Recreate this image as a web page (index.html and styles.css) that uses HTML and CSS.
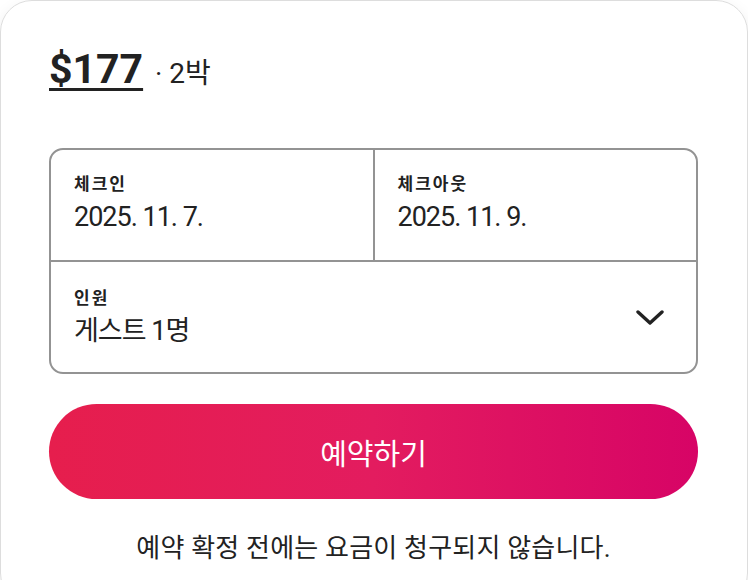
FILE: index.html
```html
<!DOCTYPE html>
<html>
<head>
    <title>예약</title>
    <link rel="stylesheet" href="styles.css">
</head>
<body>
    <div class="card">
        <div class="price-row">
            <span class="price">$177</span>
            <span class="nights">· 2박</span>
        </div>
        <div class="picker">
            <div class="dates">
                <div class="field">
                    <div class="label">체크인</div>
                    <div class="value">2025. 11. 7.</div>
                </div>
                <div class="field field-right">
                    <div class="label">체크아웃</div>
                    <div class="value">2025. 11. 9.</div>
                </div>
            </div>
            <div class="field guests">
                <div>
                    <div class="label">인원</div>
                    <div class="value">게스트 1명</div>
                </div>
                <svg class="chevron" width="28" height="16" viewBox="0 0 28 16">
                    <path d="M2 2 L14 13 L26 2" fill="none" stroke="#222" stroke-width="3.4" stroke-linecap="round" stroke-linejoin="round"/>
                </svg>
            </div>
        </div>
        <button class="reserve">예약하기</button>
        <p class="note">예약 확정 전에는 요금이 청구되지 않습니다.</p>
    </div>
</body>
</html>
```

FILE: styles.css
```css
body {
    margin: 0;
    background: #fff;
    font-family: Roboto, "Noto Sans CJK KR", sans-serif;
    color: #222;
}
.card {
    border: 1px solid #dddddd;
    border-radius: 32px;
    box-shadow: 0 6px 16px rgba(0, 0, 0, 0.08);
    padding: 44px 49px 40px 48px;
    min-height: 600px;
    box-sizing: border-box;
}
.price-row {
    display: flex;
    align-items: baseline;
    gap: 12px;
    height: 56px;
}
.price {
    font-size: 41px;
    font-weight: 700;
    text-decoration: underline;
    text-decoration-thickness: 3px;
    text-underline-offset: 5px;
}
.nights {
    font-size: 28px;
}
.picker {
    margin-top: 47px;
    border: 2px solid #939393;
    border-radius: 14px;
}
.dates {
    display: flex;
    border-bottom: 2px solid #939393;
}
.field {
    flex: 1;
    height: 110px;
    padding: 22px 24px 0 23px;
    box-sizing: border-box;
}
.field-right {
    border-left: 2px solid #939393;
}
.label {
    font-size: 17px;
    font-weight: 700;
    line-height: 24px;
    letter-spacing: 2px;
}
.value {
    font-size: 27px;
    line-height: 36px;
    letter-spacing: -1px;
    margin-top: 3px;
}
.guests {
    display: flex;
    justify-content: space-between;
    align-items: center;
    padding-top: 0;
    padding-right: 32px;
}
.chevron {
    margin-top: 2px;
}
.reserve {
    display: block;
    width: 100%;
    height: 95px;
    margin-top: 30px;
    border: none;
    border-radius: 48px;
    background: linear-gradient(to right, #e61e4d 0%, #e31c5f 50%, #d70466 100%);
    color: #fff;
    font-family: Roboto, "Noto Sans CJK KR", sans-serif;
    font-size: 29px;
    cursor: pointer;
}
.note {
    margin: 28px 0 0;
    text-align: center;
    font-size: 26px;
    letter-spacing: 0.2px;
}
```
